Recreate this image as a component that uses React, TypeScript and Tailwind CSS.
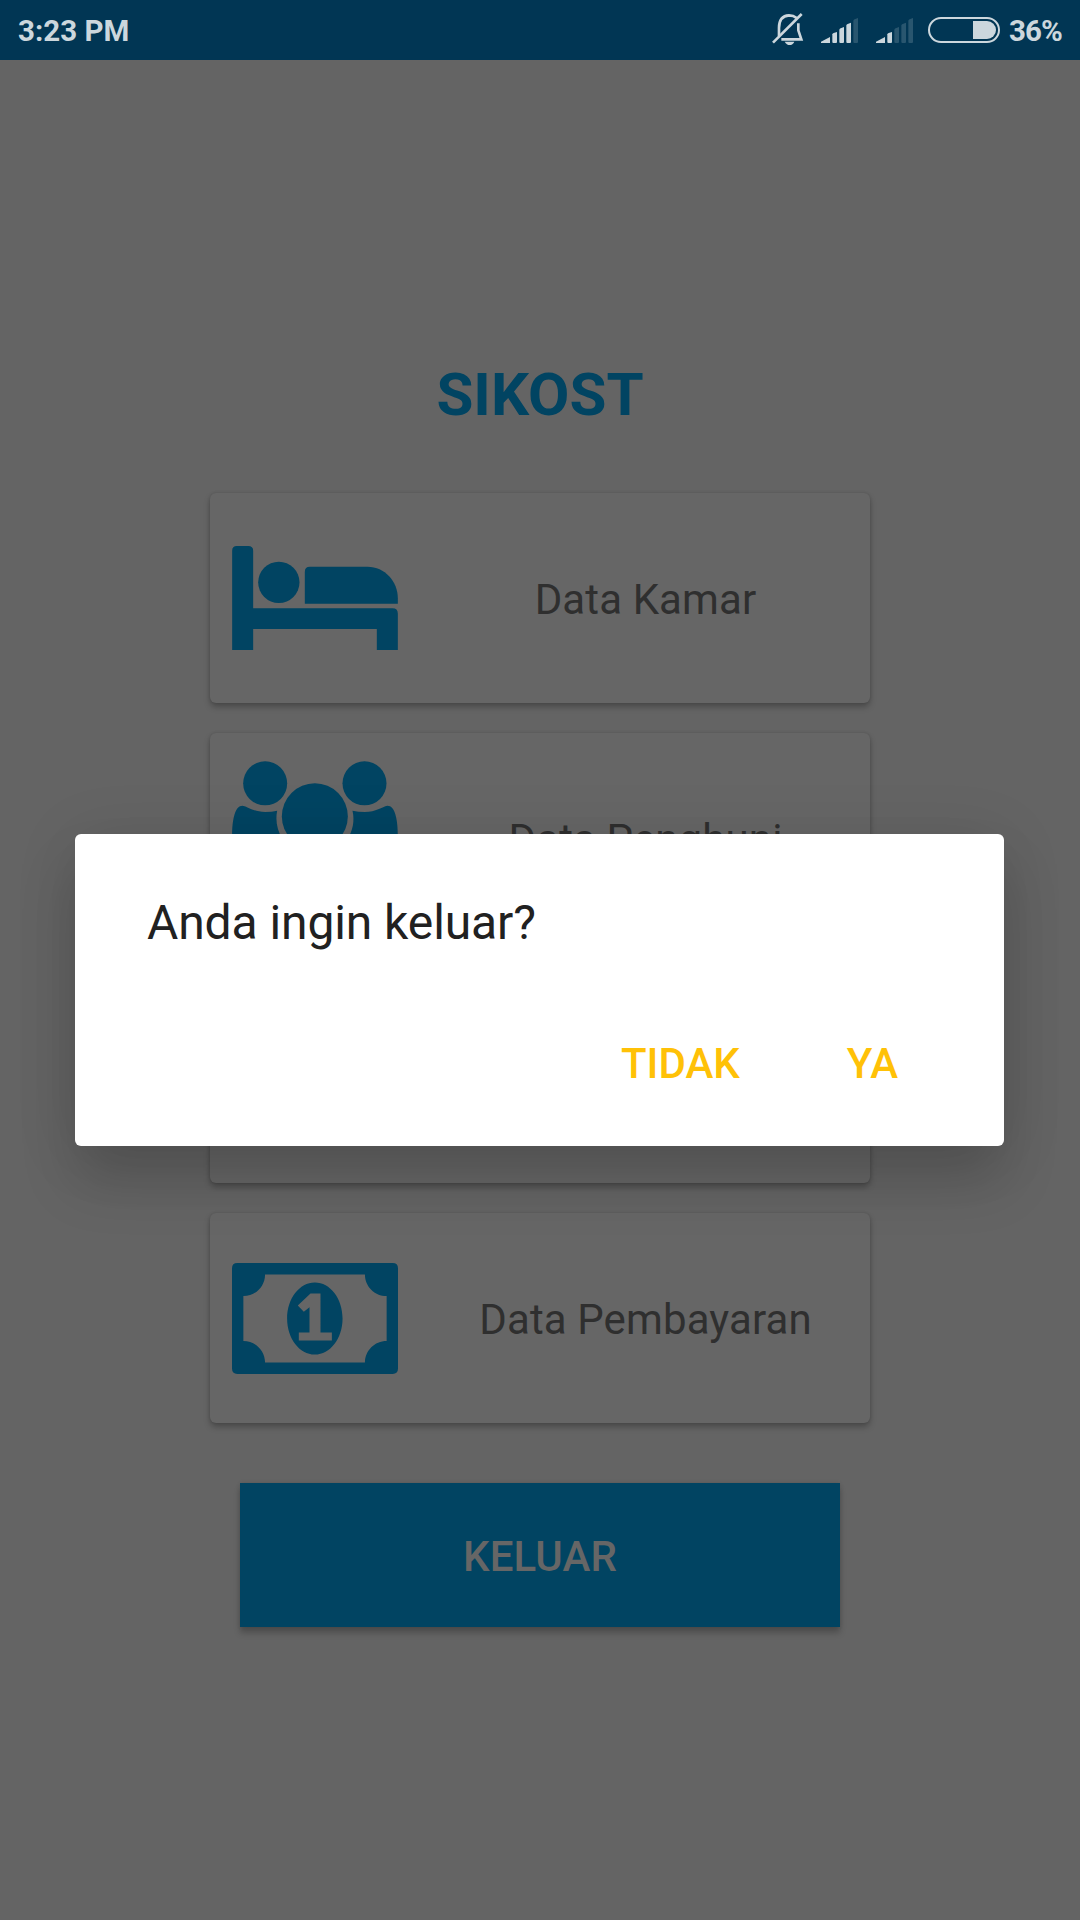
import type { ReactNode } from "react";

function BedIcon() {
  return (
    <svg className="h-[104px] w-[166px]" viewBox="97 198 497 312" fill="currentColor">
      <path d="M97 510V212Q97 198 111 198H145Q160 198 160 212V385H578Q594 385 594 401V510H531V447H160V510Z" />
      <circle cx="237" cy="307" r="62" />
      <path d="M315 371V275Q315 260 330 260H503C555 260 594 304 594 355V371Z" />
    </svg>
  );
}

function PeopleIcon() {
  return (
    <svg className="mt-[2px] h-[156px] w-[166px]" viewBox="97 121 497 468" fill="currentColor">
      <circle cx="196" cy="188" r="66" />
      <circle cx="494" cy="188" r="66" />
      <circle cx="345" cy="287" r="99" />
      <path d="M97 345C97 295 106 255 128 255C145 258 162 274 196 274Q216 274 232 270C226 300 232 330 248 355H160C125 355 97 365 97 345Z" />
      <path d="M594 345C594 295 585 255 563 255C546 258 529 274 495 274Q475 274 458 270C465 300 459 330 443 355H530C566 355 594 365 594 345Z" />
      <path d="M229 386C190 390 163 430 163 505C163 560 190 589 230 589H460C500 589 527 560 527 505C527 430 501 390 461 386C430 412 390 425 345 425S260 412 229 386Z" />
    </svg>
  );
}

function MoneyIcon() {
  return (
    <svg className="h-[111px] w-[166px]" viewBox="97 188 497 332" fill="currentColor" fillRule="evenodd">
      <path d="M113 188H578Q594 188 594 204V504Q594 520 578 520H113Q97 520 97 504V204Q97 188 113 188ZM196 222C196 258 167 287 131 287V421C167 421 196 450 196 486H495C495 450 524 421 560 421V287C524 287 495 258 495 222Z" />
      <path d="M345 246C391 246 428 294 428 354S391 462 345 462S262 414 262 354S299 246 345 246ZM332 279L294 315L312 334L329 320V396H297V420H396V396H362V279Z" />
    </svg>
  );
}

function MutedBellIcon() {
  return (
    <svg className="h-[34px] w-[32px]" viewBox="36 39 96 102" fill="none" stroke="currentColor">
      <path d="M57 108V84C57 59 69 47 87 46C96 46 104 49 110 54" strokeWidth="8" />
      <path d="M115 70V91L124 118H64" strokeWidth="8" />
      <path d="M39 128L125 42" strokeWidth="8" />
      <path d="M74 125H103C100 132 95 135 89 135S78 132 74 125Z" fill="currentColor" stroke="none" />
    </svg>
  );
}

const bars = [
  "M0 75V71L27 57V75Z",
  "M34 72V49Q35 46 38 45L48 42V72Q48 75 45 75H37Q34 75 34 72Z",
  "M55 72V35Q56 32 59 31L69 27V72Q69 75 66 75H58Q55 75 55 72Z",
  "M76 72V22Q77 19 80 18L90 14V72Q90 75 87 75H79Q76 75 76 72Z",
  "M97 72V8Q98 5 101 4L111 0V72Q111 75 108 75H100Q97 75 97 72Z",
];

function SignalIcon({ level }: { level: number }) {
  return (
    <svg className="h-[26px] w-[37px]" viewBox="0 -3 111 78" fill="currentColor">
      {bars.map((d, i) => (
        <path key={d} d={d} opacity={i < level ? 1 : 0.2} />
      ))}
    </svg>
  );
}

function StatusBar() {
  return (
    <header className="flex h-[60px] items-center justify-between bg-[#013654] pl-[18px] text-[29.5px] font-bold text-[#ccd7dd]">
      <span className="pt-[2px] leading-[60px]">3:23 PM</span>
      <div className="flex h-[60px] w-[308px] items-center">
        <MutedBellIcon />
        <div className="ml-[17px] flex gap-[18px]">
          <SignalIcon level={4} />
          <SignalIcon level={2} />
        </div>
        <div className="ml-[15px] flex h-[26px] w-[72px] items-center justify-end rounded-full border-2 border-current pr-[2px]">
          <div className="h-[18px] w-[23px] rounded-r-full bg-current" />
        </div>
        <span className="ml-[9px] pt-[2px] leading-[60px] tracking-[-0.9px]">36%</span>
      </div>
    </header>
  );
}

function MenuCard({ icon, label }: { icon?: ReactNode; label?: string }) {
  return (
    <div className="flex h-[210px] items-center rounded-[6px] bg-[#666666] pl-[22px] shadow-[0_4px_6px_rgba(0,0,0,0.26),0_0_3px_rgba(0,0,0,0.14)]">
      <div className="flex w-[166px] items-center text-[#014462]">{icon}</div>
      <span className="ml-[34px] flex-1 pt-[3px] pr-[11px] text-center text-[42px] leading-[50px] tracking-[0.12px] text-[#2f2f2f]">{label}</span>
    </div>
  );
}

function ExitDialog() {
  return (
    <div
      role="dialog"
      className="absolute top-[834px] left-[75px] h-[312px] w-[929px] rounded-[6px] bg-white pt-[61px] pl-[72px] shadow-[0_36px_56px_rgba(0,0,0,0.15),0_6px_64px_rgba(0,0,0,0.1)]"
    >
      <p className="text-[48px] leading-[56px] tracking-[-0.1px] text-[#212121]">Anda ingin keluar?</p>
      <div className="mt-[88px] flex justify-end gap-[107px] pr-[106px] text-[42px] leading-[50px] font-medium text-[#ffc107]">
        <button>TIDAK</button>
        <button>YA</button>
      </div>
    </div>
  );
}

export default function App() {
  return (
    <div className="relative h-[1920px] w-[1080px] overflow-hidden bg-[#646464] font-[Roboto,sans-serif]">
      <StatusBar />
      <main className="flex flex-col items-center pt-[300px]">
        <h1 className="text-[60px] leading-[70px] font-bold text-[#014462]">SIKOST</h1>
        <div className="mt-[63px] flex w-[660px] flex-col gap-[30px]">
          <MenuCard icon={<BedIcon />} label="Data Kamar" />
          <MenuCard icon={<PeopleIcon />} label="Data Penghuni" />
          <MenuCard />
          <MenuCard icon={<MoneyIcon />} label="Data Pembayaran" />
        </div>
        <button className="mt-[60px] h-[144px] w-[600px] bg-[#014462] pt-[2px] text-[42px] font-medium tracking-[0.1px] text-[#666666] shadow-[0_6px_6px_rgba(0,0,0,0.22),0_0_4px_rgba(0,0,0,0.12)]">
          KELUAR
        </button>
      </main>
      <ExitDialog />
    </div>
  );
}
